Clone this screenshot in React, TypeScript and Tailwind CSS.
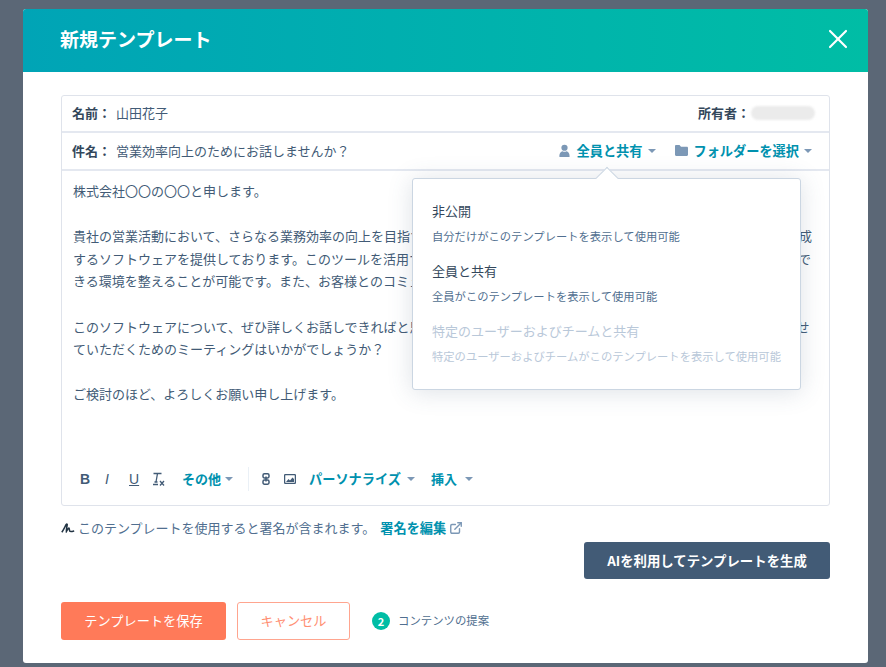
import React from 'react';
import { ExternalLink, X } from 'lucide-react';

const cjk = "font-['Noto_Sans_CJK_JP','Noto_Sans',sans-serif]";

const Caret = ({ className = '' }: { className?: string }) => (
  <svg viewBox="0 0 8 4" className={`h-[4px] w-[8px] fill-[#7c98b6] ${className}`}>
    <path d="M0 0h8L4 4z" />
  </svg>
);

const UserIcon = () => (
  <svg viewBox="0 0 12 14" className="h-[13px] w-[11px] fill-[#7c98b6]">
    <circle cx="6" cy="4" r="3.4" />
    <path d="M0.5 14c-.5-3.6 1.5-6 3.5-6.2.8.8 3.200.8 4 0 2 .2 4 2.600 3.500 6.200z" />
  </svg>
);

const FolderIcon = () => (
  <svg viewBox="0 0 13 11" className="h-[11px] w-[13px] fill-[#7c98b6]">
    <path d="M0 1.200C0 .5.500 0 1.200 0h3.300l1.500 1.800h5.800c.7 0 1.200.5 1.200 1.200v6.800c0 .7-.5 1.200-1.200 1.200H1.200C.5 11 0 10.500 0 9.800z" />
  </svg>
);

const ClearFormatIcon = () => (
  <svg viewBox="0 0 12 14" className="h-[14px] w-[12px] fill-none stroke-[#425b76]">
    <path d="M0.500 1.500h8M4.500 1.500 3 10M1.500 10h3M0 12.500h5" strokeWidth="1.300" />
    <path d="M7 9l4 4.500M11 9l-4 4.500" strokeWidth="1.300" />
  </svg>
);

const LinkIcon = () => (
  <svg viewBox="0 0 8 12" className="h-[12px] w-[8px] fill-none stroke-[#425b76]" strokeWidth="1.500">
    <rect x="1" y="0.800" width="6" height="4.200" rx="1.400" />
    <rect x="1" y="7" width="6" height="4.200" rx="1.400" />
    <path d="M4 3.500v5" />
  </svg>
);

const ImageIcon = () => (
  <svg viewBox="0 0 12 10" className="h-[10px] w-[12px]">
    <rect x="0.600" y="0.600" width="10.800" height="8.800" rx="1" fill="none" stroke="#425b76" strokeWidth="1.300" />
    <path d="M2 8l2.500-3 1.500 1.500L8.500 3.500 10 5v3z" fill="#425b76" />
  </svg>
);

const SignatureIcon = () => (
  <svg viewBox="0 0 14 10" className="h-[10px] w-[14px] fill-none stroke-[#213343]" strokeWidth="1.500">
    <path d="M0.800 9.200C2.500 7 4 3.500 5.200 1.500 5.800.6 6.400 1 6.200 2 5.900 4 5.200 6.500 5.400 8.500c1-1.500 1.800-3.200 2.600-3.600.5 0 .2 2.600.8 3.400.8.700 2.500.2 4.400-.3" />
  </svg>
);

const visibilityOptions = [
  { title: '非公開', desc: '自分だけがこのテンプレートを表示して使用可能', disabled: false },
  { title: '全員と共有', desc: '全員がこのテンプレートを表示して使用可能', disabled: false },
  { title: '特定のユーザーおよびチームと共有', desc: '特定のユーザーおよびチームがこのテンプレートを表示して使用可能', disabled: true },
];

const VisibilityMenu = () => (
  <div className="absolute left-[389px] top-[106px] z-10 h-[212px] w-[389px] rounded-[3px] border border-[#cbd6e2] bg-white px-[19px] pt-[19px] shadow-[0_2px_24px_rgba(66,91,118,0.18)]">
    <div className="absolute left-[186px] top-[-9px] h-[16px] w-[16px] rotate-45 border-l border-t border-[#cbd6e2] bg-white" />
    <div className="relative flex flex-col gap-[15px]">
      {visibilityOptions.map((o) => (
        <div key={o.title} className="h-[45px]">
          <div className={`text-[13px] leading-[26px] ${o.disabled ? 'text-[#b9c8d9]' : 'text-[#33475b]'}`}>{o.title}</div>
          <div className={`text-[11.3px] leading-[24px] ${o.disabled ? 'text-[#b9c8d9]' : 'text-[#516f90]'}`}>{o.desc}</div>
        </div>
      ))}
    </div>
  </div>
);

export default function App() {
  return (
    <div className={`h-[667px] w-[886px] overflow-hidden bg-[#5b6776] pl-[23px] pt-[9px] ${cjk}`}>
      <div className="flex h-[654px] w-[845px] flex-col overflow-hidden rounded-[3px] bg-white">
        <header className="flex h-[63px] shrink-0 items-center justify-between bg-gradient-to-r from-[#00a4b6] to-[#00bda5] pb-[4px] pl-[37px] pr-[14px]">
          <h1 className="text-[19px] font-bold leading-none text-white">新規テンプレート</h1>
          <X className="h-[32px] w-[32px] text-white" strokeWidth={1.600} />
        </header>

        <div className="relative flex flex-1 flex-col px-[38px] pt-[23px]">
          <div className="flex h-[411px] flex-col rounded-[3px] border border-[#dfe3eb] text-[13px] text-[#33475b]">
            <div className="flex h-[37px] shrink-0 items-center justify-between border-b-2 border-[#e4e8f0] pb-[1px] pl-[10px] pr-[14px]">
              <div className="flex items-center">
                <span className="w-[44px] font-bold">名前：</span>
                <span className="text-[#425b76]">山田花子</span>
              </div>
              <div className="flex items-center">
                <span className="font-bold">所有者：</span>
                <span className="ml-[1px] h-[14px] w-[64px] rounded-full bg-[#ebebeb] blur-[1px]" />
              </div>
            </div>

            <div className="flex h-[38px] shrink-0 items-center justify-between border-b-2 border-[#e4e8f0] pl-[10px] pr-[17px]">
              <div className="flex items-center">
                <span className="w-[44px] font-bold">件名：</span>
                <span className="text-[#425b76]">営業効率向上のためにお話しませんか？</span>
              </div>
              <div className="flex items-center text-[13.2px] font-bold text-[#0091ae]">
                <UserIcon />
                <span className="ml-[7px]">全員と共有</span>
                <Caret className="ml-[5px]" />
                <span className="ml-[19px]"><FolderIcon /></span>
                <span className="ml-[6px]">フォルダーを選択</span>
                <Caret className="ml-[5px]" />
              </div>
            </div>

            <div className="flex-1 px-[11px] pt-[9px] text-[13px] leading-[22.6px] text-[#425b76]">
              <p>株式会社〇〇の〇〇と申します。</p>
              <p className="mt-[22.6px]">
                貴社の営業活動において、さらなる業務効率の向上を目指すご提案として、顧客管理から見積書と提案書までを一括で自動作成するソフトウェアを提供しております。このツールを活用することで、営業担当者が本来のお客様との商談や提案活動に集中できる環境を整えることが可能です。また、お客様とのコミュニケーションも円滑になります。
              </p>
              <p className="mt-[22.6px]">
                このソフトウェアについて、ぜひ詳しくお話しできればと思っております。つきましては、一度製品の機能と画面をご紹介させていただくためのミーティングはいかがでしょうか？
              </p>
              <p className="mt-[22.6px]">ご検討のほど、よろしくお願い申し上げます。</p>
            </div>

            <div className="flex h-[55px] shrink-0 items-start pl-[18px] pt-[17px]">
              <div className="flex h-[24px] items-center border-r border-[#eaf0f6] pr-[15px] font-bold text-[#425b76]">
                <span className="w-[25px] font-['Liberation_Sans',sans-serif] text-[14px]">B</span>
                <span className="w-[24px] font-['Liberation_Sans',sans-serif] text-[14px] font-normal italic">I</span>
                <span className="w-[24px] font-['Liberation_Sans',sans-serif] text-[14px] font-normal underline">U</span>
                <ClearFormatIcon />
                <span className="ml-[17px] text-[#0091ae]">その他</span>
                <Caret className="ml-[4px]" />
              </div>
              <div className="flex h-[24px] items-center pl-[13px] font-bold">
                <LinkIcon />
                <span className="ml-[14px]"><ImageIcon /></span>
                <span className="ml-[13px] text-[13.2px] text-[#0091ae]">パーソナライズ</span>
                <Caret className="ml-[6px]" />
                <span className="ml-[16px] text-[#0091ae]">挿入</span>
                <Caret className="ml-[8px]" />
              </div>
            </div>
          </div>

          <VisibilityMenu />

          <div className="mt-[13px] flex h-[18px] items-center text-[13px] text-[#516f90]">
            <SignatureIcon />
            <span className="ml-[3px]">このテンプレートを使用すると署名が含まれます。</span>
            <span className="ml-[5px] text-[13.2px] font-bold text-[#0091ae]">署名を編集</span>
            <ExternalLink className="ml-[3px] h-[14px] w-[14px] text-[#7c98b6]" strokeWidth={2.400} />
          </div>

          <div className="mt-[5px] flex justify-end">
            <button className="h-[37px] w-[246px] rounded-[3px] bg-[#425b76] text-[13.4px] font-bold text-white">
              AIを利用してテンプレートを生成
            </button>
          </div>

          <div className="mt-[23px] flex items-center">
            <button className="h-[38px] w-[165px] rounded-[3px] bg-[#ff7a59] text-[13.2px] text-white">テンプレートを保存</button>
            <button className="ml-[11px] h-[38px] w-[113px] rounded-[3px] border border-[#ffa58f] bg-white text-[13.2px] text-[#ff8f73]">キャンセル</button>
            <span className="ml-[22px] flex h-[18px] w-[18px] items-center justify-center rounded-full bg-[#00bda5] text-[11px] font-bold text-white">2</span>
            <span className="ml-[8px] text-[11.4px] text-[#516f90]">コンテンツの提案</span>
          </div>
        </div>
      </div>
    </div>
  );
}
